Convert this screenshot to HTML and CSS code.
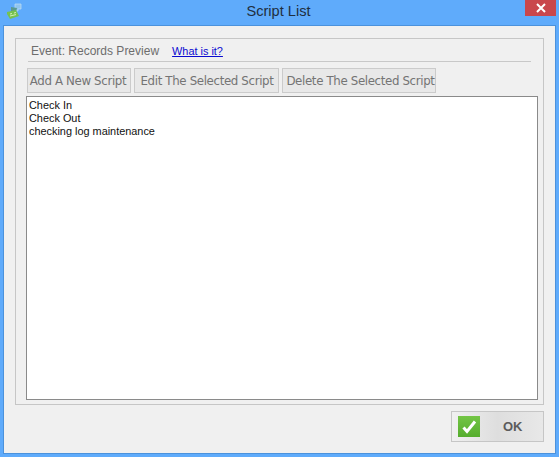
FILE: index.html
```html
<!DOCTYPE html>
<html lang="en">
<head>
<meta charset="utf-8">
<title>Script List</title>
<link rel="stylesheet" href="styles.css">
</head>
<body>
<div class="window">
  <header class="titlebar">
    <svg class="app-icon" width="16" height="16" viewBox="0 0 16 16" aria-hidden="true">
      <path d="M9 1h6v5h-3v2H9z" fill="#8fc4ee" stroke="#b9daf3" stroke-width=".8"/>
      <path d="M5 4l6 1-1 4H5z" fill="#5b9a8e"/>
      <path d="M1 9l9-2 3 6-9 3-3-5z" fill="#76c24f"/>
      <path d="M4 11l2-.5M8 10l2-.5M4 13l6-1.4" stroke="#d6f0b5" stroke-width="1" fill="none"/>
    </svg>
    <h1 class="title">Script List</h1>
    <button class="close" aria-label="Close">
      <svg width="10" height="10" viewBox="0 0 10 10" aria-hidden="true"><path d="M1 1l8 8M9 1l-8 8" stroke="#fff" stroke-width="2"/></svg>
    </button>
  </header>
  <main class="client">
    <section class="group">
      <div class="event-row">
        <span class="event">Event: Records Preview</span>
        <a class="help" href="#">What is it?</a>
      </div>
      <div class="toolbar">
        <button class="tool tool-add">Add A New Script</button>
        <button class="tool tool-edit">Edit The Selected Script</button>
        <button class="tool tool-del">Delete The Selected Script</button>
      </div>
      <ul class="list">
        <li>Check In</li>
        <li>Check Out</li>
        <li>checking log maintenance</li>
      </ul>
    </section>
    <div class="footer">
      <button class="ok">
        <span class="ok-icon">
          <svg width="15" height="14" viewBox="0 0 15 14" aria-hidden="true"><path d="M1.5 7.5l3.5 4 8-10" fill="none" stroke="#fff" stroke-width="3"/></svg>
        </span>
        <span class="ok-label">OK</span>
      </button>
    </div>
  </main>
</div>
</body>
</html>
```
FILE: styles.css
```css
* { box-sizing: border-box; }
html, body { margin: 0; padding: 0; }
body {
  width: 559px;
  height: 457px;
  overflow: hidden;
  font-family: "Liberation Sans", Arial, sans-serif;
}
.window {
  width: 559px;
  height: 457px;
  background: #5fabfb;
  padding: 0 3px 3px 3px;
  display: flex;
  flex-direction: column;
}
.titlebar {
  height: 25px;
  flex: none;
  display: flex;
  align-items: flex-start;
  position: relative;
}
.app-icon { position: absolute; left: 3px; top: 3px; }
.title {
  flex: 1;
  margin: 0 2px 0 0;
  padding-top: 2px;
  text-align: center;
  font: 400 14.6px/18px "Liberation Sans", Arial, sans-serif;
  color: #1f2f40;
}
.close {
  position: absolute;
  right: 0;
  top: 0;
  width: 31px;
  height: 16px;
  border: 0;
  padding: 0;
  background: #c9474c;
  display: flex;
  align-items: center;
  justify-content: center;
}
.client {
  flex: 1;
  background: #f0f0f0;
  border: 1px solid #4b92dc;
  padding: 12px 11px 0 11px;
  display: flex;
  flex-direction: column;
}
.group {
  height: 367px;
  border: 1px solid #c6c6c6;
  padding: 0 5px 4px 10px;
  display: flex;
  flex-direction: column;
}
.event-row {
  height: 23px;
  margin: 0 7px 0 2px;
  border-bottom: 1px solid #c8c8c8;
  padding: 1px 0 0 3px;
  display: flex;
  align-items: center;
  gap: 13px;
  flex: none;
}
.event {
  font: 12px/16px "Liberation Sans", Arial, sans-serif;
  color: #6d6d6d;
}
.help {
  font: 10.9px/16px "Liberation Sans", Arial, sans-serif;
  color: #0a0ad0;
  text-decoration: underline;
}
.toolbar {
  display: flex;
  gap: 3px;
  margin: 6px 0 3px 1px;
  flex: none;
}
.tool {
  height: 25px;
  border: 1px solid #cbcbcb;
  background: #e8e8e8;
  color: #747474;
  padding: 0;
  font: 11.8px/16px "DejaVu Sans", Tahoma, sans-serif;
  letter-spacing: -.35px;
  white-space: nowrap;
}
.tool-add { width: 104px; padding-right: 2px; }
.tool-edit { width: 145px; padding-left: 1px; }
.tool-del { width: 154px; padding-left: 3px; }
.list {
  list-style: none;
  margin: 0;
  padding: 2px 2px;
  flex: 1;
  background: #fff;
  border: 1px solid #8a8a8a;
  font: 10.9px/13px "Liberation Sans", Arial, sans-serif;
  color: #111;
}
.footer {
  flex: 1;
  display: flex;
  justify-content: flex-end;
  align-items: flex-start;
  padding-top: 6px;
}
.ok {
  width: 93px;
  height: 31px;
  padding: 0 0 0 6px;
  border: 1px solid #c6c6c6;
  background: linear-gradient(90deg, #f0f0f0 0%, #dedede 50%, #e8e8e8 100%);
  display: flex;
  align-items: center;
}
.ok-icon {
  width: 22px;
  height: 21px;
  background: linear-gradient(180deg, #73c545, #55ad2d);
  display: flex;
  align-items: center;
  justify-content: center;
  flex: none;
}
.ok-label {
  margin-left: 23px;
  font: 700 13px/16px "Liberation Sans", Arial, sans-serif;
  color: #5c5c5c;
}
```
